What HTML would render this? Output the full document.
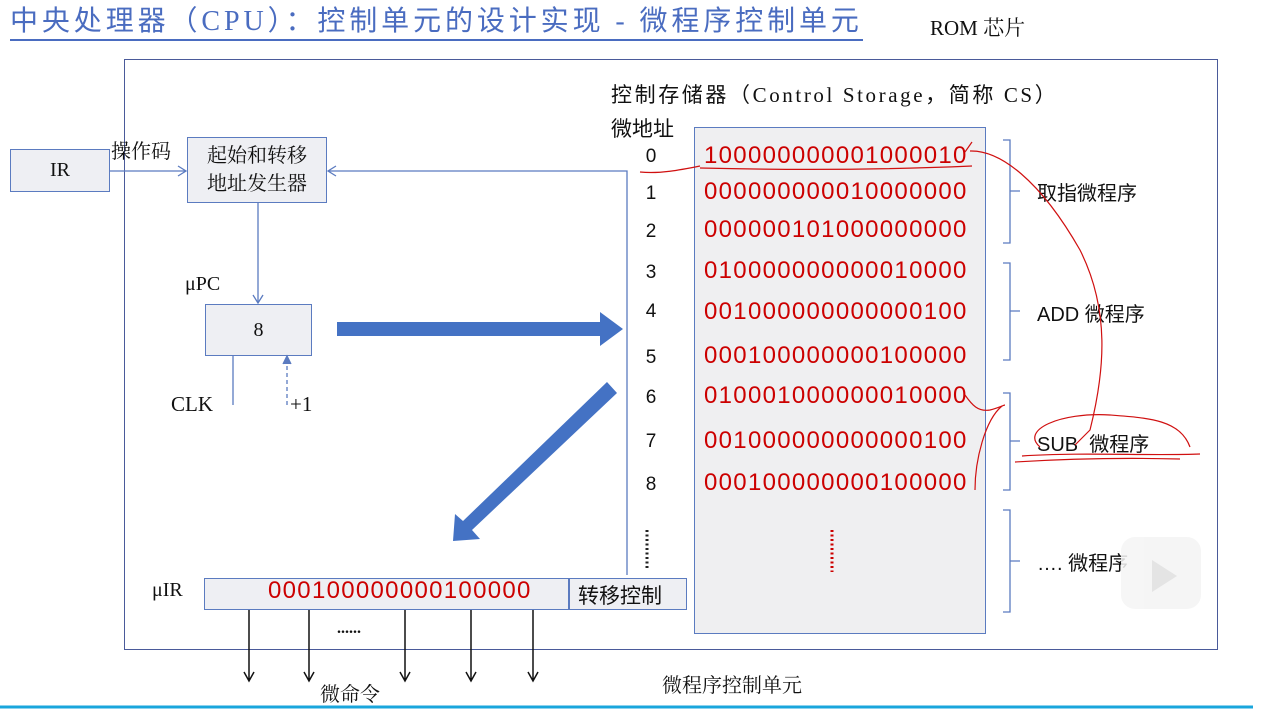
<!DOCTYPE html>
<html><head><meta charset="utf-8"><style>
body{margin:0;width:1261px;height:710px;background:#fff;position:relative;overflow:hidden;font-family:"Liberation Serif","Noto Serif CJK SC",serif;color:#111}
.a{position:absolute;white-space:nowrap}
.s{font-family:"Liberation Sans","Noto Sans CJK SC",sans-serif}
.box{position:absolute;background:#eeeff3;border:1.5px solid #5b7bc0;box-sizing:border-box}
.code{position:absolute;font-family:"Liberation Sans",sans-serif;color:#cc0000;font-size:24px;letter-spacing:1.3px;white-space:nowrap}
.num{position:absolute;font-family:"Liberation Sans",sans-serif;font-size:19px;width:20px;text-align:center}
</style></head><body>
<div class="a" style="left:10px;top:4px;font-size:28px;letter-spacing:3.9px;color:#4a6cc0;border-bottom:2px solid #4a6cc0;line-height:35px;font-family:'Liberation Serif','Noto Sans CJK SC',serif">中央处理器（CPU）：控制单元的设计实现 - 微程序控制单元</div>
<div class="a" style="left:930px;top:12px;font-size:21px">ROM 芯片</div>

<div style="position:absolute;left:124px;top:59px;width:1094px;height:591px;border:1.5px solid #4a5a9a;box-sizing:border-box"></div>

<div class="box" style="left:10px;top:149px;width:100px;height:43px;text-align:center;line-height:40px;font-size:20px">IR</div>
<div class="a" style="left:111px;top:135px;font-size:20px">操作码</div>
<div class="box" style="left:187px;top:137px;width:140px;height:66px;text-align:center;font-size:20px;line-height:28px;padding-top:4px">起始和转移<br>地址发生器</div>
<div class="a" style="left:185px;top:273px;font-size:20px">μPC</div>
<div class="box" style="left:205px;top:304px;width:107px;height:52px;text-align:center;line-height:50px;font-size:20px">8</div>
<div class="a" style="left:171px;top:392px;font-size:21px">CLK</div>
<div class="a" style="left:290px;top:392px;font-size:21px">+1</div>

<div class="a" style="left:611px;top:79px;font-size:21px;letter-spacing:2.6px;font-family:'Liberation Serif','Noto Sans CJK SC',serif">控制存储器（Control Storage，简称 CS）</div>
<div class="a" style="left:611px;top:113px;font-size:21px;font-family:'Liberation Serif','Noto Sans CJK SC',serif">微地址</div>

<div class="box" style="left:694px;top:127px;width:292px;height:507px;background:#efeff1"></div>
<div class="num" style="left:641px;top:146px">0</div>
<div class="num" style="left:641px;top:183px">1</div>
<div class="num" style="left:641px;top:221px">2</div>
<div class="num" style="left:641px;top:262px">3</div>
<div class="num" style="left:641px;top:301px">4</div>
<div class="num" style="left:641px;top:347px">5</div>
<div class="num" style="left:641px;top:387px">6</div>
<div class="num" style="left:641px;top:431px">7</div>
<div class="num" style="left:641px;top:474px">8</div>
<div class="code" style="left:704px;top:142px">100000000001000010</div>
<div class="code" style="left:704px;top:178px">000000000010000000</div>
<div class="code" style="left:704px;top:216px">000000101000000000</div>
<div class="code" style="left:704px;top:257px">010000000000010000</div>
<div class="code" style="left:704px;top:298px">001000000000000100</div>
<div class="code" style="left:704px;top:342px">000100000000100000</div>
<div class="code" style="left:704px;top:382px">010001000000010000</div>
<div class="code" style="left:704px;top:427px">001000000000000100</div>
<div class="code" style="left:704px;top:469px">000100000000100000</div>

<div class="a" style="left:1037px;top:177px;font-size:20px;font-family:'Liberation Serif','Noto Sans CJK SC',serif">取指微程序</div>
<div class="a s" style="left:1037px;top:298px;font-size:20px">ADD 微程序</div>
<div class="a s" style="left:1037px;top:428px;font-size:20px">SUB &nbsp;微程序</div>
<div class="a s" style="left:1037px;top:547px;font-size:20px">…. 微程序</div>

<div class="a" style="left:152px;top:579px;font-size:20px">μIR</div>
<div class="box" style="left:204px;top:578px;width:483px;height:32px;background:#eeeff3"></div>
<div style="position:absolute;left:568px;top:578px;width:1.5px;height:32px;background:#5b7bc0"></div>
<div class="code" style="left:268px;top:577px">000100000000100000</div>
<div class="a" style="left:578px;top:580px;font-size:21px;font-family:'Liberation Sans','Noto Sans CJK SC',sans-serif">转移控制</div>
<div class="a" style="left:337px;top:620px;font-size:16px;font-weight:bold">......</div>
<div class="a" style="left:320px;top:678px;font-size:20px">微命令</div>
<div class="a" style="left:662px;top:669px;font-size:20px">微程序控制单元</div>

<svg width="1261" height="710" style="position:absolute;left:0;top:0" fill="none">
<g stroke="#5b7bc0" stroke-width="1.3">
<path d="M110 171H185M178 166L186 171L178 176"/>
<path d="M627 575V171H328M336 166L328 171L336 176"/>
<path d="M258 203V302M253 295L258 303L263 295"/>
<path d="M233 356V405"/>
<path d="M287 405V358" stroke-dasharray="4 3"/>
<path d="M283 364L287 356L291 364" fill="#5b7bc0"/>
<path d="M1003 140h7v103h-7M1010 191h10"/>
<path d="M1003 263h7v97h-7M1010 311h10"/>
<path d="M1003 393h7v97h-7M1010 441h10"/>
<path d="M1003 510h7v102h-7M1010 561h10"/>
</g>
<path d="M337 322H600V312L623 329L600 346V336H337Z" fill="#4472c4"/>
<path d="M607 382L617 393L472 530L480 539L453 541L455 514L463 521Z" fill="#4472c4"/>
<path d="M647 530V570" stroke="#222" stroke-width="3" stroke-dasharray="2 2.5"/>
<path d="M832 530V572" stroke="#cc0000" stroke-width="3" stroke-dasharray="2 2.5"/>
<g stroke="#111" stroke-width="1.5">
<path d="M249 610V680M244 672L249 681L254 672"/>
<path d="M309 610V680M304 672L309 681L314 672"/>
<path d="M405 610V680M400 672L405 681L410 672"/>
<path d="M471 610V680M466 672L471 681L476 672"/>
<path d="M533 610V680M528 672L533 681L538 672"/>
</g>
<g stroke="#d01010" stroke-width="1.2">
<path d="M640 172C660 174 680 170 700 166"/>
<path d="M700 168C780 170 880 170 972 166"/>
<path d="M965 152L972 142"/>
<path d="M970 151C1000 150 1040 180 1080 250C1110 310 1105 370 1090 430L1075 445"/>
<path d="M1040 447C1020 430 1060 412 1110 415C1150 418 1180 420 1190 447"/>
<path d="M1022 456C1080 452 1150 456 1200 454"/>
<path d="M1015 462C1080 458 1140 458 1180 459"/>
<path d="M965 395C972 405 978 412 990 410C998 408 1004 405 1005 405"/>
<path d="M1002 406C985 420 975 460 975 490"/>
</g>
<path d="M0 707H1253" stroke="#1aa6dc" stroke-width="3"/>
<g opacity="0.85">
<rect x="1121" y="537" width="80" height="72" rx="14" fill="#f4f4f4"/>
<path d="M1152 560L1177 576L1152 592Z" fill="#e0e0e0"/>
</g>
</svg>
</body></html>
